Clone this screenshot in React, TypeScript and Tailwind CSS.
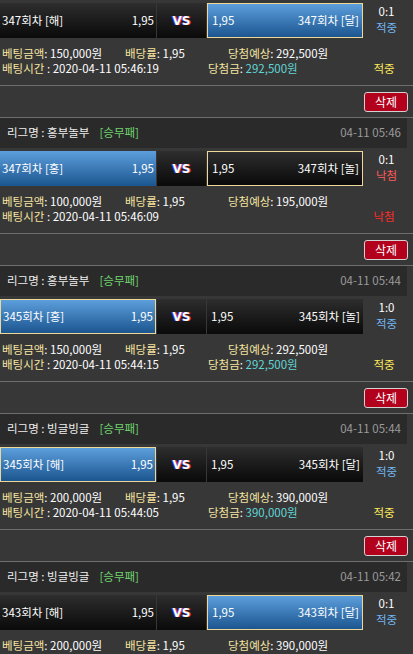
import React from 'react';

type Bet = {
  league: string;
  date: string;
  left: string;
  right: string;
  blue: 'L' | 'R';
  pick: 'L' | 'R';
  score: string;
  win: boolean;
  amount: string;
  expect: string;
  time: string;
};

const bets: Bet[] = [
  { league: '흥부놀부', date: '04-11 05:46', left: '347회차 [해]', right: '347회차 [달]', blue: 'R', pick: 'R', score: '0:1', win: true, amount: '150,000원', expect: '292,500원', time: '2020-04-11 05:46:19' },
  { league: '흥부놀부', date: '04-11 05:46', left: '347회차 [홍]', right: '347회차 [놀]', blue: 'L', pick: 'R', score: '0:1', win: false, amount: '100,000원', expect: '195,000원', time: '2020-04-11 05:46:09' },
  { league: '흥부놀부', date: '04-11 05:44', left: '345회차 [홍]', right: '345회차 [놀]', blue: 'L', pick: 'L', score: '1:0', win: true, amount: '150,000원', expect: '292,500원', time: '2020-04-11 05:44:15' },
  { league: '빙글빙글', date: '04-11 05:44', left: '345회차 [해]', right: '345회차 [달]', blue: 'L', pick: 'L', score: '1:0', win: true, amount: '200,000원', expect: '390,000원', time: '2020-04-11 05:44:05' },
  { league: '빙글빙글', date: '04-11 05:42', left: '343회차 [해]', right: '343회차 [달]', blue: 'R', pick: 'R', score: '0:1', win: true, amount: '200,000원', expect: '390,000원', time: '2020-04-11 05:44:05' },
];

const TeamBox = ({ name, blue, picked, side }: { name: string; blue: boolean; picked: boolean; side: 'L' | 'R' }) => (
  <div
    className={`w-[156px] h-[35px] flex items-center justify-between ${side === 'L' ? 'pl-[2px] pr-[2px]' : 'pl-[4px] pr-[3px]'} ${
      blue ? 'bg-linear-to-b from-[#5c9fdc] to-[#1b5690]' : 'bg-linear-to-b from-[#2e2e2e] to-[#0a0a0a]'
    } ${picked ? 'border border-[#ecd898]' : ''}`}
  >
    {side === 'L' ? (
      <>
        <span>{name}</span>
        <span>1,95</span>
      </>
    ) : (
      <>
        <span>1,95</span>
        <span>{name}</span>
      </>
    )}
  </div>
);

const BetBlock = ({ b, first }: { b: Bet; first?: boolean }) => (
  <div>
    {first ? (
      <div className="h-[3px]" />
    ) : (
      <>
        <div className="h-px bg-[#6e6e6e]" />
        {/* 리그 헤더 */}
        <div className="h-[30px] mr-[6px] bg-[#2a2a2a] flex items-center justify-between pl-[7px] pr-[6px]">
          <span className="text-[#eeeeee]">
            리그명 : {b.league}<span className="ml-[10px] text-[#6fd46f]">[승무패]</span>
          </span>
          <span className="text-[#9a9a9a]">{b.date}</span>
        </div>
        <div className="h-[3px]" />
      </>
    )}
    {/* 경기 */}
    <div className="flex gap-px h-[35px] text-white">
      <TeamBox name={b.left} side="L" blue={b.blue === 'L'} picked={b.pick === 'L'} />
      <div className="w-[49px] h-[35px] flex items-center justify-center bg-linear-to-b from-[#2e2e2e] to-[#0a0a0a]">
        <span className="font-['DejaVu_Sans',sans-serif] font-bold text-[12px] text-white [text-shadow:-1px_0_#3344ff,1px_0_#ff2a2a]">VS</span>
      </div>
      <TeamBox name={b.right} side="R" blue={b.blue === 'R'} picked={b.pick === 'R'} />
      <div className="flex-1 flex flex-col items-center pr-[4px] leading-[16px]">
        <span className="text-white">{b.score}</span>
        <span className={b.win ? 'text-[#72b6f2]' : 'text-[#ff5a5a]'}>{b.win ? '적중' : '낙첨'}</span>
      </div>
    </div>
    {/* 베팅 정보 */}
    <div className="h-[47px] pt-[8px] leading-[15px]">
      <div className="flex pl-[2px]">
        <span className="w-[123px]">
          <span className="text-[#f6e4a0]">베팅금액</span>
          <span className="text-white">: {b.amount}</span>
        </span>
        <span className="w-[103px]">
          <span className="text-[#f6e4a0]">배당률</span>
          <span className="text-white">: 1,95</span>
        </span>
        <span>
          <span className="text-[#f6e4a0]">당첨예상</span>
          <span className="text-white">: {b.expect}</span>
        </span>
      </div>
      <div className="flex pl-[2px]">
        <span className="w-[206px]">
          <span className="text-[#f6e4a0]">배팅시간</span>
          <span className="text-white"> : {b.time}</span>
        </span>
        <span className="w-[154px]">
          {b.win && (
            <>
              <span className="text-[#f6e4a0]">당첨금</span>
              <span className="text-white">: </span>
              <span className="text-[#62d6d6]">{b.expect}</span>
            </>
          )}
        </span>
        <span className={`w-[44px] text-center ${b.win ? 'text-[#ffea5a]' : 'text-[#ff2a2a]'}`}>{b.win ? '적중' : '낙첨'}</span>
      </div>
    </div>
    <div className="h-px bg-[#6e6e6e]" />
    <div className="h-[31px] flex items-center justify-end pr-[5px]">
      <button className="w-[44px] h-[20px] rounded-[3px] border border-[#d2d2d2] bg-[#b3001d] text-white text-[12px] leading-none">
        삭제
      </button>
    </div>
  </div>
);

export default function App() {
  return (
    <div className="w-[413px] h-[654px] overflow-hidden bg-[#373737] font-['Noto_Sans_CJK_KR',sans-serif] text-[11.5px]">
      {bets.map((b, i) => (
        <BetBlock key={i} b={b} first={i === 0} />
      ))}
    </div>
  );
}
